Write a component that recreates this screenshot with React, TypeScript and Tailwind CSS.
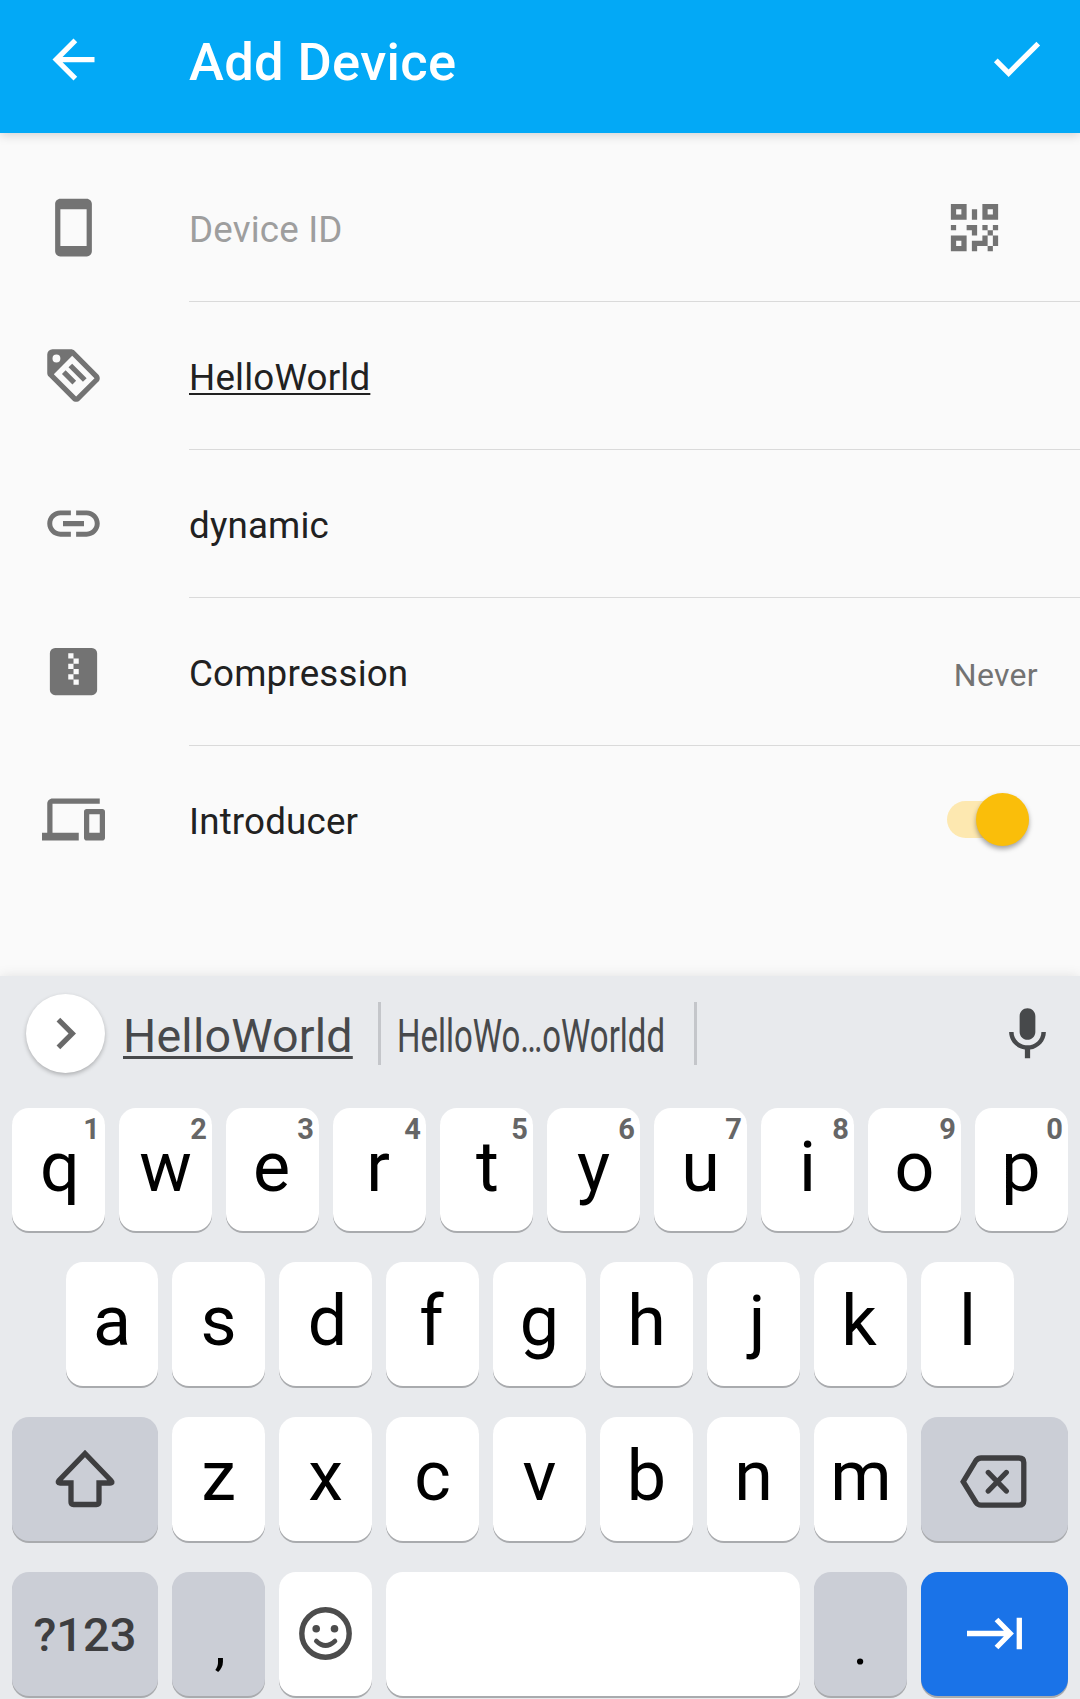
import type { ReactNode } from "react";

const ICON = "h-[63px] w-[63px] shrink-0 fill-current";

function Glyph({ d, className = "" }: { d: string; className?: string }) {
  return (
    <svg viewBox="0 0 24 24" className={`${ICON} ${className}`} fillRule="evenodd">
      <path d={d} />
    </svg>
  );
}

const PATHS = {
  back: "M20 11H7.83l5.59-5.59L12 4l-8 8 8 8 1.41-1.41L7.83 13H20v-2z",
  check: "M9 16.17L4.83 12l-1.42 1.41L9 19 21 7l-1.41-1.41z",
  phone:
    "M17 1.01L7 1c-1.1 0-2 .9-2 2v18c0 1.1.9 2 2 2h10c1.1 0 2-.9 2-2V3c0-1.1-.9-1.99-2-1.99zM17 19H7V5h10v14z",
  tag: "M21.41 11.58l-9-9C12.04 2.21 11.53 2 11 2H4a2 2 0 0 0-2 2v7c0 .53.21 1.04.59 1.41l9 9c.36.36.86.59 1.41.59s1.05-.23 1.41-.59l7-7c.37-.36.59-.86.59-1.41s-.23-1.06-.59-1.42zM13 20L4.5 11.5l7-7L20 13zM5.5 4a1.5 1.5 0 1 1 0 3 1.5 1.5 0 0 1 0-3zM10.1 8.9l1.4-1.4L17 13l-1.4 1.4zM7.6 11.4L9 10l4 4-1.4 1.4z",
  link: "M3.9 12c0-1.71 1.39-3.1 3.1-3.1h4V7H7c-2.76 0-5 2.24-5 5s2.24 5 5 5h4v-1.9H7c-1.71 0-3.1-1.39-3.1-3.1zM8 13h8v-2H8v2zm9-6h-4v1.9h4c1.71 0 3.1 1.39 3.1 3.1s-1.39 3.1-3.1 3.1h-4V17h4c2.76 0 5-2.24 5-5s-2.24-5-5-5z",
  zip: "M5 3h14a2 2 0 0 1 2 2v14a2 2 0 0 1-2 2H5a2 2 0 0 1-2-2V5a2 2 0 0 1 2-2zM10 5h2v2h-2zM12 7h2v2h-2zM10 9h2v2h-2zM12 11h2v2h-2zM10 13h2v2h-2zM12 15h2v2h-2z",
  devices:
    "M4 6h18V4H4c-1.1 0-2 .9-2 2v11H0v3h14v-3H4V6zm19 2h-6c-.55 0-1 .45-1 1v10c0 .55.45 1 1 1h6c.55 0 1-.45 1-1V9c0-.55-.45-1-1-1zm-1 9h-4v-7h4v7z",
  qr: "M3 3h6v6H3zM5 5v2h2V5zM15 3h6v6h-6zM17 5v2h2V5zM3 15h6v6H3zM5 17v2h2v-2zM11 5h2v4h-2zM3 11h2v2H3zM9 11h4v4h-2v-2H9zM15 11h2v2h-2zM19 11h2v2h-2zM17 13h2v2h-2zM15 15h2v4h-4v2h-2v-4h4zM19 15h2v4h-2zM17 19h2v2h-2z",
  chevron: "M10 6L8.59 7.41 13.17 12l-4.58 4.59L10 18l6-6z",
  mic: "M12 14c1.66 0 2.99-1.34 2.99-3L15 5c0-1.66-1.34-3-3-3S9 3.34 9 5v6c0 1.66 1.34 3 3 3zm5.3-3c0 3-2.54 5.1-5.3 5.1S6.7 14 6.7 11H5c0 3.41 2.72 6.23 6 6.72V21h2v-3.28c3.28-.48 6-3.3 6-6.72h-1.7z",
};

function Row({ icon, last, children }: { icon: string; last?: boolean; children: ReactNode }) {
  return (
    <div className="flex h-[148px] pl-[42px]">
      <div className="flex h-[147px] w-[147px] shrink-0 items-center text-[#737373]">
        <Glyph d={icon} />
      </div>
      <div
        className={`flex flex-1 items-center justify-between border-b pr-[42px] text-[36.75px] tracking-[0.17px] text-[#212121] ${
          last ? "border-transparent" : "border-[#dadada]"
        }`}
      >
        {children}
      </div>
    </div>
  );
}

function Key({ width = "w-[93px]", tone = "bg-white", children }: { width?: string; tone?: string; children?: ReactNode }) {
  return (
    <div
      className={`relative flex h-full shrink-0 justify-center rounded-[17px] shadow-[0_2px_0_#a9abae] ${width} ${tone}`}
    >
      {children}
    </div>
  );
}

const NUDGE: Record<string, string> = {
  q: "pl-[3px]",
  e: "pr-[2px]",
  r: "pr-[3px]",
  t: "pl-[2px]",
  p: "pr-[1px]",
  d: "pl-[4px]",
  f: "pr-[2px]",
  j: "pl-[7px]",
  k: "pr-[3px]",
  m: "pl-[1px]",
};

function Letter({ char, hint, width }: { char: string; hint?: string; width?: string }) {
  return (
    <Key width={width}>
      <span className={`text-[70px] leading-[118px] text-black ${NUDGE[char] ?? ""}`}>{char}</span>
      {hint && (
        <span className="absolute top-[4px] right-[5px] text-[29px] leading-[34px] font-bold text-[#666]">{hint}</span>
      )}
    </Key>
  );
}

const GRAY = "bg-[#cbced6]";
const LINE = "h-full w-full fill-none stroke-[#3e3e40]";

export default function App() {
  return (
    <div className="flex h-[1699px] w-[1080px] flex-col overflow-hidden bg-[#fafafa] font-['Roboto',sans-serif]">
      <header className="z-10 flex h-[133px] shrink-0 items-center bg-[#03a9f6] pr-[32px] pb-[14px] pl-[42px] text-white shadow-[0_2px_10px_rgba(0,0,0,0.17)]">
        <Glyph d={PATHS.back} />
        <h1 className="ml-[84px] flex-1 pt-[4px] text-[52.5px] leading-[62px] font-medium tracking-[0.35px]">
          Add Device
        </h1>
        <Glyph d={PATHS.check} className="mb-[2px]" />
      </header>

      <main className="h-[843px] shrink-0 pt-[21px]">
        <Row icon={PATHS.phone}>
          <span className="pt-1 text-[#9e9e9e]">Device ID</span>
          <Glyph d={PATHS.qr} className="mr-[32px] text-[#737373]" />
        </Row>
        <Row icon={PATHS.tag}>
          <span className="pt-1 underline decoration-[2px] underline-offset-[3px] [text-decoration-skip-ink:none]">
            HelloWorld
          </span>
        </Row>
        <Row icon={PATHS.link}>
          <span className="pt-1">dynamic</span>
        </Row>
        <Row icon={PATHS.zip}>
          <span className="pt-1">Compression</span>
          <span className="pt-[6px] text-[32px] tracking-[0.3px] text-[#737373]">Never</span>
        </Row>
        <Row icon={PATHS.devices} last>
          <span className="pt-1">Introducer</span>
          <div className="mr-[9px] flex h-[37px] w-[82.5px] items-center justify-end rounded-full bg-[#fde8b0]">
            <div className="h-[53px] w-[53px] shrink-0 rounded-full bg-[#fabe0a] shadow-[0_3px_5px_rgba(0,0,0,0.35)]" />
          </div>
        </Row>
      </main>

      <section className="flex-1 bg-[#e8eaed] shadow-[0_0_12px_rgba(0,0,0,0.1)]">
        <div className="flex h-[132px] items-center pb-[17px] pl-[26px] text-[46.6px] leading-[54px] text-[#47494b]">
          <div className="flex h-[79px] w-[79px] shrink-0 items-center justify-center rounded-full bg-white text-[#696969] shadow-[0_2px_4px_rgba(0,0,0,0.25)]">
            <Glyph d={PATHS.chevron} />
          </div>
          <div className="ml-[18px] w-[255px] pt-[5px] tracking-[0.2px]">
            <span className="underline decoration-[3px] underline-offset-[4px] [text-decoration-skip-ink:none]">
              HelloWorld
            </span>
          </div>
          <div className="h-[63px] w-[3px] bg-[#c4c6ca]" />
          <div className="w-[313px] pt-[5px] pl-[16px]">
            <span className="inline-block origin-left scale-x-[0.707] whitespace-nowrap">HelloWo…oWorldd</span>
          </div>
          <div className="h-[63px] w-[3px] bg-[#c4c6ca]" />
          <Glyph d={PATHS.mic} className="mt-[2px] ml-[299px]" />
        </div>

        <div className="flex flex-col gap-[31px] pl-[12px]">
          <div className="flex h-[123px] gap-[14px]">
            {[..."qwertyuiop"].map((c, i) => (
              <Letter key={c} char={c} hint={"1234567890"[i]} />
            ))}
          </div>
          <div className="flex h-[124px] gap-[14px] pl-[54px]">
            {[..."asdfghjkl"].map((c) => (
              <Letter key={c} char={c} width={c === "a" ? "w-[92px]" : undefined} />
            ))}
          </div>
          <div className="flex h-[124px] gap-[14px]">
            <Key width="w-[146px]" tone={GRAY}>
              <svg viewBox="12 1417 146 124" className={LINE} strokeWidth="5.3">
                <path d="M85 1453.500L59 1480.500Q57 1483 60 1483H71V1502Q71 1504.500 73.500 1504.500H96.500Q99 1504.500 99 1502V1483H110Q113.500 1483 111 1480.500Z" />
              </svg>
            </Key>
            {[..."zxcvbnm"].map((c) => (
              <Letter key={c} char={c} />
            ))}
            <Key width="w-[147px]" tone={GRAY}>
              <svg viewBox="921 1417 147 124" className={LINE} strokeWidth="5.3">
                <path d="M981 1458H1019Q1023.800 1458 1023.800 1462.500V1500.500Q1023.800 1505.200 1019 1505.200H981Q978 1505.200 976 1502.500L963.200 1481.700L976 1460.500Q978 1458 981 1458Z" />
                <path strokeLinecap="round" d="M988.300 1472.500L1006.300 1491M1006.300 1472.500L988.300 1491" />
              </svg>
            </Key>
          </div>
          <div className="flex h-[124px] gap-[14px]">
            <Key width="w-[146px]" tone={GRAY}>
              <span className="text-[47px] leading-[126px] font-medium text-[#3e3e40]">?123</span>
            </Key>
            <Key tone={GRAY}>
              <span className="pl-[3px] text-[56px] leading-[147px] text-black">,</span>
            </Key>
            <Key>
              <svg viewBox="279 1572 93 124" className="h-full w-full fill-none stroke-[#4c4c4c]" strokeWidth="5.4">
                <circle cx="325.500" cy="1633.500" r="23.700" />
                <path strokeLinecap="round" strokeWidth="4.600" d="M316.300 1641Q325.500 1650 335 1641" />
                <g className="fill-[#4c4c4c] stroke-none">
                  <circle cx="316.200" cy="1628.700" r="3.800" />
                  <circle cx="334.500" cy="1628.700" r="3.800" />
                </g>
              </svg>
            </Key>
            <Key width="w-[414px]" />
            <Key tone={GRAY}>
              <span className="text-[56px] leading-[147px] text-black">.</span>
            </Key>
            <Key width="w-[147px]" tone="bg-[#1a73e8]">
              <svg viewBox="921 1572 147 124" className="h-full w-full fill-none stroke-white" strokeWidth="5.3">
                <path d="M967 1633.500H1010M996.500 1619.500L1010.200 1633.500L996.500 1647.500M1019.300 1617.700V1649.300" />
              </svg>
            </Key>
          </div>
        </div>
      </section>
    </div>
  );
}
